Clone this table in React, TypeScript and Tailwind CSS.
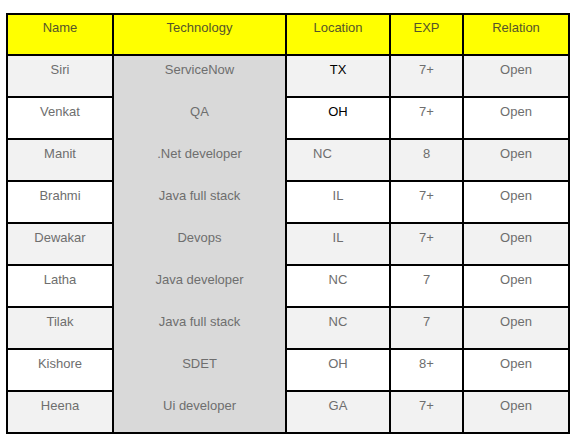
const rows = [
  { name: "Siri", tech: "ServiceNow", loc: "TX", exp: "7+", dark: true },
  { name: "Venkat", tech: "QA", loc: "OH", exp: "7+", dark: true },
  { name: "Manit", tech: ".Net developer", loc: "NC", exp: "8", left: true },
  { name: "Brahmi", tech: "Java full stack", loc: "IL", exp: "7+" },
  { name: "Dewakar", tech: "Devops", loc: "IL", exp: "7+" },
  { name: "Latha", tech: "Java developer", loc: "NC", exp: "7" },
  { name: "Tilak", tech: "Java full stack", loc: "NC", exp: "7" },
  { name: "Kishore", tech: "SDET", loc: "OH", exp: "8+" },
  { name: "Heena", tech: "Ui developer", loc: "GA", exp: "7+" },
];

const headers = ["Name", "Technology", "Location", "EXP", "Relation"];

export default function App() {
  return (
    <div className="w-[578px] h-[439px] bg-white pt-[13px] pl-[6px] font-['Liberation_Sans',Arial,sans-serif] text-[13px] leading-[15px]">
      <div className="grid w-max grid-cols-[106px_173px_104px_73px_106px] border-l-2 border-t-2 border-black">
        {headers.map((h) => (
          <div
            key={h}
            className="h-[41px] bg-[#ffff00] border-r-2 border-b-2 border-black pt-[5px] text-center text-[#55552a]"
          >
            {h}
          </div>
        ))}
        {rows.map((r, i) => {
          const bg = i % 2 === 0 ? "bg-[#f2f2f2]" : "bg-white";
          const last = i === rows.length - 1;
          const cell = "h-[42px] border-r-2 border-b-2 border-black pt-[6px] text-[#6e6e6e]";
          return [
            <div key={r.name + "n"} className={`${cell} ${bg} text-center`}>
              {r.name}
            </div>,
            <div
              key={r.name + "t"}
              className={`h-[42px] bg-[#d9d9d9] border-r-2 border-black pt-[6px] text-center text-[#6e6e6e] ${last ? "border-b-2" : ""}`}
            >
              {r.tech}
            </div>,
            <div
              key={r.name + "l"}
              className={`${cell} ${bg} ${r.left ? "text-left pl-[26px]" : "text-center"} ${r.dark ? "!text-black" : ""}`}
            >
              {r.loc}
            </div>,
            <div key={r.name + "e"} className={`${cell} ${bg} text-center`}>
              {r.exp}
            </div>,
            <div key={r.name + "r"} className={`${cell} ${bg} text-center`}>
              Open
            </div>,
          ];
        })}
      </div>
    </div>
  );
}
